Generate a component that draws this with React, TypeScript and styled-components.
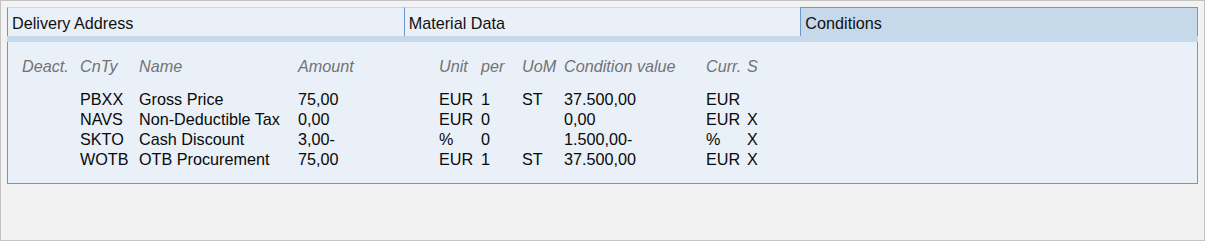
import React from "react";
import styled, { createGlobalStyle } from "styled-components";

const Global = createGlobalStyle`
  html, body { margin: 0; padding: 0; background: #f2f2f2; }
  * { box-sizing: border-box; }
`;

const Frame = styled.div`
  width: 1205px;
  height: 241px;
  background: #f2f2f2;
  border: 1px solid #c3c3c3;
  padding: 6px;
  font-family: "Liberation Sans", Arial, sans-serif;
  font-size: 16.2px;
  color: #111;
`;

const Panel = styled.div`
  display: flex;
  flex-direction: column;
`;

const TabStrip = styled.div`
  display: flex;
  height: 29px;
`;

const Tab = styled.div<{ $active?: boolean; $last?: boolean }>`
  flex: 1;
  display: flex;
  align-items: center;
  padding: 2px 0 0 4px;
  background: ${(p) => (p.$active ? "#c5d9eb" : "#e9f0f8")};
  border-top: 1px solid ${(p) => (p.$active ? "#6d96c9" : "#c9d6e4")};
  border-left: 1px solid #6d96c9;
  border-right: ${(p) => (p.$last ? "1px solid #6d96c9" : "none")};
  white-space: nowrap;
`;

const Stripe = styled.div`
  height: 6px;
  background: #c5d9eb;
`;

const Body = styled.div`
  background: #e9f0f8;
  border: 1px solid #6d96c9;
  border-top: none;
  padding: 14px 0 0 14px;
  height: 142px;
`;

const Grid = styled.div`
  display: grid;
  grid-template-columns: 58px 59px 159px 141px 42px 41px 42px 142px 41px 40px;
  grid-template-rows: 33px repeat(4, 20px);
  line-height: 20px;
`;

const HeadCell = styled.div`
  font-style: italic;
  color: #737373;
  align-self: start;
  white-space: nowrap;
`;

const Cell = styled.div`
  color: #0a0a0a;
  white-space: nowrap;
`;

const headers = ["Deact.", "CnTy", "Name", "Amount", "Unit", "per", "UoM", "Condition value", "Curr.", "S"];

const rows = [
  ["", "PBXX", "Gross Price", "75,00", "EUR", "1", "ST", "37.500,00", "EUR", ""],
  ["", "NAVS", "Non-Deductible Tax", "0,00", "EUR", "0", "", "0,00", "EUR", "X"],
  ["", "SKTO", "Cash Discount", "3,00-", "%", "0", "", "1.500,00-", "%", "X"],
  ["", "WOTB", "OTB Procurement", "75,00", "EUR", "1", "ST", "37.500,00", "EUR", "X"],
];

export default function App() {
  return (
    <>
      <Global />
      <Frame>
        <Panel>
          <TabStrip>
            <Tab>Delivery Address</Tab>
            <Tab>Material Data</Tab>
            <Tab $active $last>Conditions</Tab>
          </TabStrip>
          <Stripe />
          <Body>
            <Grid>
              {headers.map((h, i) => (
                <HeadCell key={i}>{h}</HeadCell>
              ))}
              {rows.map((r, ri) =>
                r.map((c, ci) => <Cell key={`${ri}-${ci}`}>{c}</Cell>)
              )}
            </Grid>
          </Body>
        </Panel>
      </Frame>
    </>
  );
}
